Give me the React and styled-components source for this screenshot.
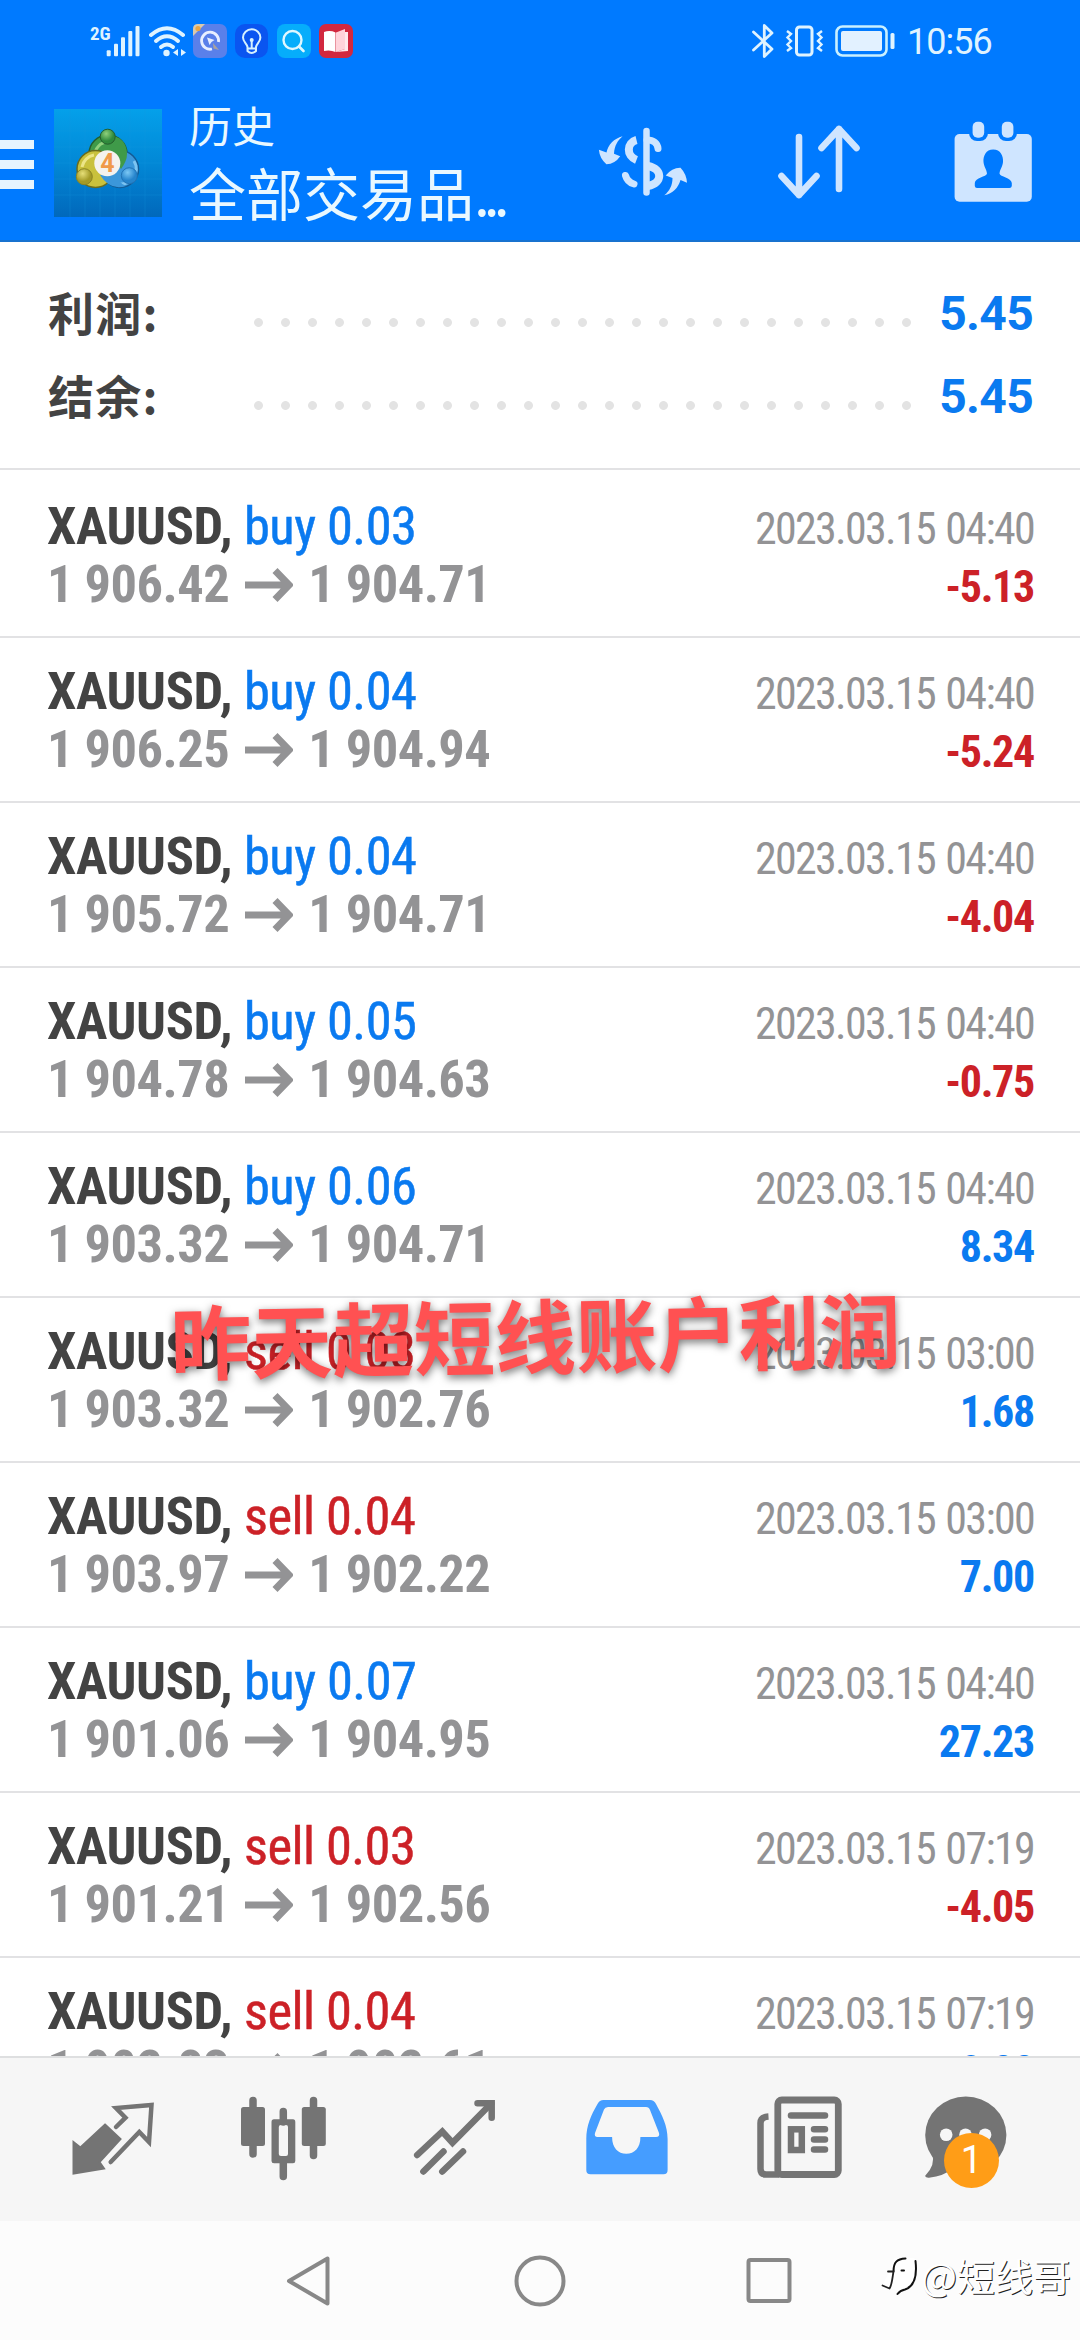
import React from "react";
import styled, { createGlobalStyle, css } from "styled-components";

const deals = [
  { type: "buy", volume: "0.03", open: "1 906.42", close: "1 904.71", time: "2023.03.15 04:40", profit: "-5.13" },
  { type: "buy", volume: "0.04", open: "1 906.25", close: "1 904.94", time: "2023.03.15 04:40", profit: "-5.24" },
  { type: "buy", volume: "0.04", open: "1 905.72", close: "1 904.71", time: "2023.03.15 04:40", profit: "-4.04" },
  { type: "buy", volume: "0.05", open: "1 904.78", close: "1 904.63", time: "2023.03.15 04:40", profit: "-0.75" },
  { type: "buy", volume: "0.06", open: "1 903.32", close: "1 904.71", time: "2023.03.15 04:40", profit: "8.34" },
  { type: "sell", volume: "0.03", open: "1 903.32", close: "1 902.76", time: "2023.03.15 03:00", profit: "1.68" },
  { type: "sell", volume: "0.04", open: "1 903.97", close: "1 902.22", time: "2023.03.15 03:00", profit: "7.00" },
  { type: "buy", volume: "0.07", open: "1 901.06", close: "1 904.95", time: "2023.03.15 04:40", profit: "27.23" },
  { type: "sell", volume: "0.03", open: "1 901.21", close: "1 902.56", time: "2023.03.15 07:19", profit: "-4.05" },
  { type: "sell", volume: "0.04", open: "1 902.83", close: "1 902.61", time: "2023.03.15 07:19", profit: "0.88" },
];

const App = () => {
  return (
    <Screen>
      <GlobalStyle />
      <Header>
        <StatusBar />
        <Toolbar>
          <Menu>
            <MenuLine />
            <MenuLine />
            <MenuLine />
          </Menu>
          <AppLogo />
          <Titles>
            <Title>历史</Title>
            <Subtitle>
              全部交易品<Ellipsis>...</Ellipsis>
            </Subtitle>
          </Titles>
          <Actions>
            <CurrencyIcon />
            <SortIcon />
            <CalendarIcon />
          </Actions>
        </Toolbar>
      </Header>

      <Summary>
        <SummaryRow>
          <SummaryLabel>利润:</SummaryLabel>
          <Leader />
          <SummaryValue>5.45</SummaryValue>
        </SummaryRow>
        <SummaryRow>
          <SummaryLabel>结余:</SummaryLabel>
          <Leader />
          <SummaryValue>5.45</SummaryValue>
        </SummaryRow>
      </Summary>

      <DealList>
        {deals.map((deal, i) => (
          <Deal key={i}>
            <Line>
              <Symbol>XAUUSD,</Symbol>
              <Order $sell={deal.type === "sell"}>
                {deal.type} {deal.volume}
              </Order>
              <Time>{deal.time}</Time>
            </Line>
            <Line>
              <Price>{deal.open}</Price>
              <ArrowIcon />
              <Price>{deal.close}</Price>
              <Profit $loss={deal.profit.startsWith("-")}>{deal.profit}</Profit>
            </Line>
          </Deal>
        ))}
      </DealList>

      <TabBar>
        <Tab><QuotesIcon /></Tab>
        <Tab><ChartIcon /></Tab>
        <Tab><TradeIcon /></Tab>
        <Tab $active><HistoryIcon /></Tab>
        <Tab><NewsIcon /></Tab>
        <Tab>
          <ChatIcon />
          <Badge>1</Badge>
        </Tab>
      </TabBar>

      <NavBar>
        <NavButton>
          <svg width="60" height="60" viewBox="0 0 60 60">
            <path d="M9 30 L47.5 7.5 V52.5 Z" />
          </svg>
        </NavButton>
        <NavButton>
          <svg width="60" height="60" viewBox="0 0 60 60">
            <circle cx="30" cy="30" r="23.5" />
          </svg>
        </NavButton>
        <NavButton>
          <svg width="60" height="60" viewBox="0 0 60 60">
            <rect x="8.5" y="9" width="41" height="41" rx="2" />
          </svg>
        </NavButton>
      </NavBar>

      <Caption>昨天超短线账户利润</Caption>
      <Watermark>
        <WatermarkLogo />
        @短线哥
      </Watermark>
    </Screen>
  );
};

export default App;

/* ---------- status bar ---------- */

const StatusBar = () => (
  <Status>
    <StatusLeft>
      <Network>2G</Network>
      <svg width="34" height="31" viewBox="0 0 34 31" fill="#dff3ff">
        <rect x="0.7" y="24.3" width="4" height="6" rx="1" />
        <rect x="8" y="17.7" width="4" height="12.6" rx="1" />
        <rect x="15" y="11.3" width="4" height="19" rx="1" />
        <rect x="22.3" y="5" width="4" height="25.3" rx="1" />
        <rect x="29.5" y="0" width="4" height="30.3" rx="1" />
      </svg>
      <Wifi width="38" height="31" viewBox="0 0 38 31">
        <path d="M2 9 Q18 -4.5 34 9" />
        <path d="M7 15 Q18 5.5 29 15" />
        <path d="M12 21 Q18 16 24 21" />
        <circle cx="17.5" cy="27" r="3.2" />
        <polygon points="24,26.5 29,23 29,30" />
        <polygon points="37,26.5 32,23 32,30" />
      </Wifi>
      <AppBadges>
        <svg width="34" height="34" viewBox="0 0 34 34">
          <rect width="34" height="34" rx="7" fill="#5a80ea" />
          <path d="M0 12 V5 Q0 0 5 0 H12 Z" fill="#d9c9ac" />
          <circle cx="5" cy="4.5" r="2.6" fill="#e8a544" />
          <path d="M19 25 A8.500 8.500 0 1 1 25.500 18" fill="none" stroke="#e8efff" strokeWidth="2.800" />
          <path d="M14 13.500 L21.500 16 L18.500 18 L16.500 21 Z" fill="#e8efff" />
          <path d="M20 19 L26 26 L20.500 24.500 Z" fill="#a9a29f" />
        </svg>
        <svg width="34" height="34" viewBox="0 0 34 34">
          <rect width="33" height="34" rx="10" fill="#0a55f0" />
          <path
            d="M12.5 23 C12 19.500 8 18 8 13.500 A8.700 8.200 0 0 1 25.400 13.500 C25.400 18 21.500 19.500 21 23 V27 Q16.700 31 12.500 27 Z M12.500 24.500 H21 M16.700 16 V24"
            fill="none"
            stroke="#d5f1ff"
            strokeWidth="2"
          />
          <circle cx="16.700" cy="16" r="2" fill="#d5f1ff" />
        </svg>
        <svg width="34" height="34" viewBox="0 0 34 34">
          <rect width="34" height="34" rx="8" fill="#06adfb" />
          <circle cx="15.5" cy="16" r="9" fill="none" stroke="#dff7ff" strokeWidth="2.4" />
          <path d="M22 22.500 L26.500 27" stroke="#dff7ff" strokeWidth="2.6" strokeLinecap="round" />
        </svg>
        <svg width="34" height="34" viewBox="0 0 34 34">
          <rect width="34" height="34" rx="7" fill="#d2283f" />
          <path d="M5 8 Q11 6 16.500 8.500 V28 Q11 25.500 5 27 Z" fill="#fff" />
          <path d="M17 8.500 L26 5 V25 L17 28 Z" fill="#ffd3da" />
          <path d="M26 8 H29 V27 L17 28 L26 25 Z" fill="#ffe9ec" />
        </svg>
      </AppBadges>
    </StatusLeft>
    <StatusRight>
      <svg width="22" height="36" viewBox="0 0 22 36" fill="none" stroke="#dff3ff" strokeWidth="2.8" strokeLinejoin="round" strokeLinecap="round">
        <path d="M1.500 9 L20 26 L12.300 33.500 V2.500 L20 10 L1.500 27" />
      </svg>
      <svg width="39" height="32" viewBox="0 0 39 32" fill="none" stroke="#dff3ff" strokeWidth="3">
        <rect x="11.500" y="2" width="15.500" height="28" rx="3" />
        <path d="M2 6 L6 9 L2.500 12.500 L6 16 L2.500 19.500 L6 23 L2 26" strokeWidth="2.400" />
        <path d="M37 6 L33 9 L36.500 12.500 L33 16 L36.500 19.500 L33 23 L37 26" strokeWidth="2.400" />
      </svg>
      <svg width="61" height="32" viewBox="0 0 61 32">
        <rect x="1.500" y="1.500" width="50" height="29" rx="6" fill="none" stroke="#c9f0ff" strokeWidth="2.600" />
        <rect x="6" y="6" width="41" height="20" rx="2" fill="#e2f1ff" />
        <rect x="55.500" y="8" width="4" height="16" rx="1.500" fill="#dff3ff" />
      </svg>
      <Clock>10:56</Clock>
    </StatusRight>
  </Status>
);

/* ---------- header icons ---------- */

const AppLogo = () => (
  <Logo width="108" height="108" viewBox="0 0 108 108">
    <defs>
      <linearGradient id="logoBg" x1="0" y1="0" x2="0" y2="1">
        <stop offset="0" stopColor="#04a0ea" />
        <stop offset="0.5" stopColor="#0288d6" />
        <stop offset="1" stopColor="#0168bb" />
      </linearGradient>
      <radialGradient id="green" cx="0.4" cy="0.3">
        <stop offset="0" stopColor="#8fd07c" />
        <stop offset="1" stopColor="#2f8a3c" />
      </radialGradient>
      <radialGradient id="yellow" cx="0.4" cy="0.3">
        <stop offset="0" stopColor="#e6df78" />
        <stop offset="1" stopColor="#a39a26" />
      </radialGradient>
      <radialGradient id="blue" cx="0.4" cy="0.3">
        <stop offset="0" stopColor="#7cc8f5" />
        <stop offset="1" stopColor="#2584cc" />
      </radialGradient>
    </defs>
    <rect width="108" height="108" fill="url(#logoBg)" />
    <path
      d="M16 0 V108 M31 0 V108 M46 0 V108 M61 0 V108 M76 0 V108 M91 0 V108 M0 22 H108 M0 38 H108 M0 54 H108 M0 70 H108 M0 86 H108"
      stroke="#1c9be0"
      strokeOpacity="0.25"
    />
    <circle cx="54" cy="45" r="19" fill="#3f9a49" stroke="#245e2c" strokeWidth="1.500" />
    <path d="M41 47 A13 13 0 0 1 54 33" fill="none" stroke="#8fd07c" strokeWidth="3" />
    <circle cx="66" cy="60" r="18.500" fill="#3b97da" stroke="#135a94" strokeWidth="1.500" />
    <path d="M80 52 A15 15 0 0 1 62 74" fill="none" stroke="#7cc4f2" strokeWidth="3" />
    <circle cx="41.500" cy="60" r="18.500" fill="#c9c13c" stroke="#6b6c1c" strokeWidth="1.500" />
    <path d="M28 58 A15 15 0 0 1 40 46" fill="none" stroke="#ece587" strokeWidth="3" />
    <path d="M54 26 Q73 28 73 45 Q73 52 67 60 L56 44 Z" fill="#3f9a49" />
    <path d="M46 66 L62 64 Q64 74 72 77 Q56 82 46 66 Z" fill="#3b97da" />
    <circle cx="53.7" cy="27.7" r="7.5" fill="url(#green)" stroke="#245e2c" />
    <circle cx="30.300" cy="67.700" r="8" fill="url(#yellow)" stroke="#8a8422" />
    <circle cx="75.300" cy="66.700" r="8" fill="url(#blue)" stroke="#2273b5" />
    <circle cx="53.300" cy="54.300" r="13" fill="#f4f2ee" />
    <LogoDigit x="53.300" y="63" textAnchor="middle">4</LogoDigit>
  </Logo>
);

const CurrencyIcon = () => (
  <svg width="92" height="76" viewBox="0 0 92 76" fill="none" stroke="#cfe5ff" strokeWidth="8">
    <path d="M49.500 7 V68.500" strokeWidth="6.500" strokeLinecap="round" />
    <path d="M39.500 16 C29.500 18.500 29 32 39.500 36" />
    <path d="M50 16 C56.500 16 60.500 19 61 24.500" strokeLinecap="round" strokeWidth="7" />
    <path d="M51 42 C66 45 66 59 51 62" />
    <path d="M28.500 51.500 C30 57 33.500 59 37 60" strokeLinecap="round" strokeWidth="7" />
    <g fill="#cfe5ff" stroke="none">
      <path d="M25.600 12.300 C17 14.500 11 21 9.500 28.500 L1.900 25.700 Q2.500 34 9.400 40.300 Q18 40 23.200 32.300 L17 29.700 C17.500 22 20.500 16.500 25.600 12.300 Z" />
      <path d="M67.300 71.300 C72.500 67 75.500 61.500 75.500 54 L68.700 51.500 Q75 43.500 83.500 43.700 Q89.500 50 90 58.700 L83.500 56 C81 64 76 69.500 67.300 71.300 Z" />
    </g>
  </svg>
);

const SortIcon = () => (
  <svg width="90" height="80" viewBox="0 0 90 80" fill="none" stroke="#cfe5ff" strokeWidth="6.6" strokeLinecap="round" strokeLinejoin="round">
    <path d="M24 15 V73 M6.500 54 L24 73 L41.500 54" />
    <path d="M64 67 V7 M46.500 26 L64 7 L81.500 26" />
  </svg>
);

const CalendarIcon = () => (
  <svg width="84" height="86" viewBox="0 0 84 86">
    <rect x="3.600" y="15" width="77.200" height="67.700" rx="5" fill="#cfe5ff" />
    <rect x="18" y="-4" width="19" height="26" rx="8" fill="#007aff" />
    <rect x="47" y="-4" width="19" height="26" rx="8" fill="#007aff" />
    <rect x="21.600" y="2.700" width="11.600" height="16" rx="5" fill="#cfe5ff" />
    <rect x="50.800" y="2.700" width="11.600" height="16" rx="5" fill="#cfe5ff" />
    <path
      d="M42.200 30.500 C49.500 30.500 52.500 37 52 43 C51.500 48 49 50 48.500 54.500 C49 58 60.400 58.500 60.800 64 V67 Q60.500 69 58.500 69 H26 Q24 69 23.800 67 V64 C24 58.500 35.500 58 36 54.500 C35.500 50 33 48 32.500 43 C32 37 35 30.500 42.200 30.500 Z"
      fill="#007aff"
    />
  </svg>
);

const ArrowIcon = () => (
  <Arrow width="48" height="34" viewBox="0 0 48 34">
    <path d="M0 17 H44 M30 2.500 L44 17 L30 31.500" />
  </Arrow>
);

/* ---------- tab icons ---------- */

const QuotesIcon = () => (
  <TabIcon viewBox="0 0 96 96">
    <path
      d="M40 35.500 L55.500 50 L34.500 73 L39 79.500 L8.500 84.500 V53 L15.400 58.500 Z"
      fill="currentColor"
      strokeWidth="2"
    />
    <path d="M51 38 L60.500 28.700 L51 19 L86.500 16 L84 53 L74.300 43 L45.700 73" strokeWidth="4.500" />
  </TabIcon>
);

const ChartIcon = () => (
  <TabIcon viewBox="0 0 96 96">
    <path d="M17 11.500 V65 M77.500 11.500 V66.500 M47.300 22.500 V33 M47.300 71 V87.500" strokeWidth="7.500" />
    <g fill="currentColor" stroke="none">
      <rect x="5" y="18" width="24" height="39" rx="2.500" />
      <rect x="65.800" y="18" width="24" height="39" rx="2.500" />
      <path fillRule="evenodd" d="M38 30.300 H57 Q59.300 30.300 59.300 33 V72 Q59.300 74.300 57 74.300 H38 Q35.500 74.300 35.500 72 V33 Q35.500 30.300 38 30.300 Z M45 36 Q42.800 36 42.800 38 V65 Q42.800 67 45 67 H50 Q52 67 52 65 V38 Q52 36 50 36 Z" />
    </g>
  </TabIcon>
);

const TradeIcon = () => (
  <TabIcon viewBox="0 0 96 96">
    <path d="M10.200 66 L35.300 42.500 L45.500 53.700 L84.200 14.500" strokeWidth="6.500" />
    <path d="M70.500 14.300 H84.700 V28.700" strokeWidth="6.500" />
    <path d="M16.400 82.500 L36.500 62.500 M35.300 82.500 L56 62.500" strokeWidth="6.500" />
  </TabIcon>
);

const HistoryIcon = () => (
  <TabIcon viewBox="0 0 96 96">
    <path
      fillRule="evenodd"
      fill="currentColor"
      stroke="none"
      d="M25.500 11 H72 Q76 11 78 15 C84 26 89.600 37 89.600 50 V81 Q89.600 85.300 85.500 85.300 H12.500 Q8.300 85.300 8.300 81 V50 C8.300 37 13 26 19.500 15 Q21.500 11 25.500 11 Z M30 18 Q27 18 26 20.500 L17 44 Q16 48 19.500 48 H34.100 C34.100 59 40 64.700 48.300 64.700 S62.400 59 62.400 48 H78 Q82 48 81 44 L72 21 Q71 18 68 18 Z"
    />
  </TabIcon>
);

const NewsIcon = () => (
  <TabIcon viewBox="0 0 96 96">
    <rect x="28.800" y="11" width="60.500" height="74.500" rx="4" strokeWidth="6.800" />
    <path d="M19.500 27.500 Q11.500 28 11.500 34 V80 Q11.500 85.500 17 85.500 H30" strokeWidth="6.500" strokeLinecap="butt" />
    <path d="M42 26.500 H76" strokeWidth="6.500" />
    <rect x="42" y="40.300" width="10.800" height="20.700" strokeWidth="6.500" />
    <path d="M65 40.300 H76 M65 50.400 H76 M65 60.600 H76" strokeWidth="6.500" />
  </TabIcon>
);

const ChatIcon = () => (
  <TabIcon viewBox="0 0 96 96">
    <g fill="currentColor" stroke="none">
      <ellipse cx="45.800" cy="46" rx="40.600" ry="38.500" />
      <path d="M12 64 Q16 76 5 87 Q6 89 9 88.700 Q24 87 32 80 Z" />
    </g>
    <g fill="#f6f6f6" stroke="none">
      <circle cx="26.200" cy="45.700" r="6.300" />
      <circle cx="45.500" cy="45.700" r="6.300" />
      <circle cx="65.100" cy="45.700" r="6.300" />
    </g>
  </TabIcon>
);

const WatermarkLogo = () => (
  <svg width="40" height="46" viewBox="0 0 40 46" fill="none" strokeLinecap="round">
    <path d="M13 6 H33 Q36 9 35 24 Q32 34 18 38 Q8 38 2 32 L8 20 Z" fill="#fff" />
    <path d="M12.500 19.500 C12.500 10 16 7 24.500 6.500" stroke="#111" strokeWidth="2" />
    <path d="M34.500 9 C36 22 35 34 24 37.500 Q19 38.500 16.500 42" stroke="#111" strokeWidth="2" />
    <path d="M7 19.500 H12.500 C11.500 25 11 33 8.500 36.500 L1.500 33.500" stroke="#222" strokeWidth="1.800" />
    <path d="M20.500 18.500 H23" stroke="#111" strokeWidth="2" />
  </svg>
);

/* ---------- styles ---------- */

const GlobalStyle = createGlobalStyle`
  * {
    box-sizing: border-box;
  }
  body {
    margin: 0;
    background: #ffffff;
    font-family: "Roboto Condensed", "Roboto", "Noto Sans CJK SC", sans-serif;
  }
  svg {
    display: block;
    flex: none;
  }
`;

const Screen = styled.main`
  position: relative;
  width: 1080px;
  height: 2340px;
  display: flex;
  flex-direction: column;
  overflow: hidden;
`;

const Header = styled.header`
  flex: none;
  height: 242px;
  background: #007aff;
  border-bottom: 2px solid #1872cf;
`;

const Status = styled.div`
  height: 82px;
  display: flex;
  align-items: center;
  justify-content: space-between;
  padding: 0 86px 0 90px;
`;

const StatusLeft = styled.div`
  display: flex;
  align-items: center;
`;

const Network = styled.span`
  align-self: flex-start;
  width: 16px;
  font-size: 19px;
  line-height: 19px;
  font-weight: 700;
  color: #dff3ff;
`;

const Wifi = styled.svg`
  margin-left: 9px;
  fill: #dff3ff;

  path {
    fill: none;
    stroke: #dff3ff;
    stroke-width: 4;
    stroke-linecap: round;
  }
`;

const AppBadges = styled.div`
  display: flex;
  gap: 8px;
  margin-left: 6px;
`;

const StatusRight = styled.div`
  display: flex;
  align-items: center;
  gap: 11px;
`;

const Clock = styled.span`
  font: 400 36px/40px "Roboto", sans-serif;
  width: 87px;
  margin-top: 2px;
  letter-spacing: -1px;
  color: #dff3ff;
`;

const Toolbar = styled.div`
  height: 160px;
  display: flex;
  align-items: center;
`;

const Menu = styled.div`
  width: 54px;
  display: flex;
  flex-direction: column;
  gap: 11px;
  margin-top: 5px;
`;

const MenuLine = styled.span`
  width: 34px;
  height: 9px;
  background: #e6f4ff;
`;

const Logo = styled.svg`
  margin-top: 1px;
`;

const LogoDigit = styled.text`
  font: 700 25px "Roboto", sans-serif;
  fill: #f09a4a;
`;

const Titles = styled.div`
  width: 402px;
  padding: 2px 0 0 27px;
  color: #e9f8ff;
  font-family: "Noto Sans CJK SC", sans-serif;
  white-space: nowrap;
`;

const Title = styled.h1`
  margin: 0;
  font-size: 43px;
  line-height: 56px;
  font-weight: 400;
`;

const Subtitle = styled.p`
  margin: 0;
  font-size: 57px;
  line-height: 79px;
`;

const Ellipsis = styled.span`
  letter-spacing: -6px;
`;

const Actions = styled.div`
  flex: 1;
  display: flex;
  align-items: center;
  justify-content: space-between;
  padding: 0 45px 0 33px;
`;

const Summary = styled.section`
  flex: none;
  height: 228px;
  padding: 30px 47px 0 48px;
  border-bottom: 2px solid #e2e2e4;
`;

const SummaryRow = styled.div`
  height: 83px;
  display: flex;
  align-items: center;
`;

const SummaryLabel = styled.span`
  width: 197px;
  margin-bottom: 5px;
  font: 700 46px/60px "Noto Sans CJK SC", sans-serif;
  letter-spacing: 1.2px;
  color: #434343;
`;

const Leader = styled.span`
  width: 675px;
  height: 9px;
  margin-top: 17px;
  background: radial-gradient(circle, #e3e3e3 4px, transparent 4.8px) 0 0 / 27px 9px repeat-x;
`;

const SummaryValue = styled.span`
  margin-left: auto;
  font: 700 48px/60px "Roboto", sans-serif;
  letter-spacing: -0.7px;
  color: #0a7af0;
`;

const DealList = styled.section`
  flex: 1;
  min-height: 0;
  padding-top: 3px;
  overflow: hidden;
`;

const Deal = styled.article`
  height: 165px;
  padding: 24px 46px 0 47px;
  border-bottom: 2px solid #e2e2e4;
`;

const Line = styled.div`
  height: 58px;
  display: flex;
  align-items: baseline;
  line-height: 58px;
  font-size: 52.5px;
  white-space: pre;
`;

const Symbol = styled.span`
  width: 197px;
  font-weight: 700;
  letter-spacing: -0.4px;
  color: #434343;
`;

const Order = styled.span`
  font-weight: 400;
  letter-spacing: -0.55px;
  color: ${({ $sell }) => ($sell ? "#cc2127" : "#0a7af0")};
  -webkit-text-stroke: 0.5px currentColor;
`;

const Time = styled.time`
  margin-left: auto;
  font-size: 44px;
  letter-spacing: -1.7px;
  word-spacing: 2px;
  color: #939395;
`;

const Price = styled.span`
  font-weight: 700;
  letter-spacing: -0.55px;
  color: #939395;
`;

const Arrow = styled.svg`
  margin: 0 15px 0 16px;
  fill: none;
  stroke: #939395;
  stroke-width: 7;
`;

const Profit = styled.span`
  margin-left: auto;
  font-size: 44px;
  font-weight: 700;
  letter-spacing: -1.3px;
  color: ${({ $loss }) => ($loss ? "#cc2127" : "#0a7af0")};
`;

const TabBar = styled.nav`
  flex: none;
  height: 165px;
  display: flex;
  padding: 0 27px 6px;
  background: #f6f6f6;
  border-top: 2px solid #dedfe0;
`;

const Tab = styled.div`
  position: relative;
  width: 171px;
  display: flex;
  align-items: center;
  justify-content: center;
  color: #747474;
  ${({ $active }) =>
    $active &&
    css`
      color: #459dff;
    `}
`;

const TabIcon = styled.svg`
  width: 96px;
  height: 96px;
  fill: none;
  stroke: currentColor;
  stroke-linecap: round;
`;

const Badge = styled.span`
  position: absolute;
  left: 62px;
  top: 75px;
  width: 55px;
  height: 55px;
  border-radius: 50%;
  background: #ff9d17;
  color: #ffffff;
  font: 400 38px/55px "Roboto", sans-serif;
  text-align: center;
`;

const NavBar = styled.footer`
  flex: none;
  height: 119px;
  display: flex;
  align-items: center;
  justify-content: center;
  background: #fcfcfc;
`;

const NavButton = styled.div`
  width: 230px;
  display: flex;
  justify-content: center;

  svg {
    fill: none;
    stroke: #888888;
    stroke-width: 4;
    stroke-linejoin: round;
  }
`;

const Caption = styled.div`
  position: absolute;
  left: 170px;
  top: 1278px;
  font: 700 81.2px/110px "Noto Sans CJK SC", sans-serif;
  color: #ff5152;
  white-space: nowrap;
  text-shadow: 0 3px 9px rgba(0, 0, 0, 0.55);
  transform: rotate(-1deg);
`;

const Watermark = styled.div`
  position: absolute;
  left: 881px;
  top: 2252px;
  height: 46px;
  display: flex;
  align-items: center;
  font: 400 38px/46px "Noto Sans CJK SC", sans-serif;
  color: #ffffff;
  text-shadow: 1px 1px 0.5px #222222;
  white-space: nowrap;
`;
